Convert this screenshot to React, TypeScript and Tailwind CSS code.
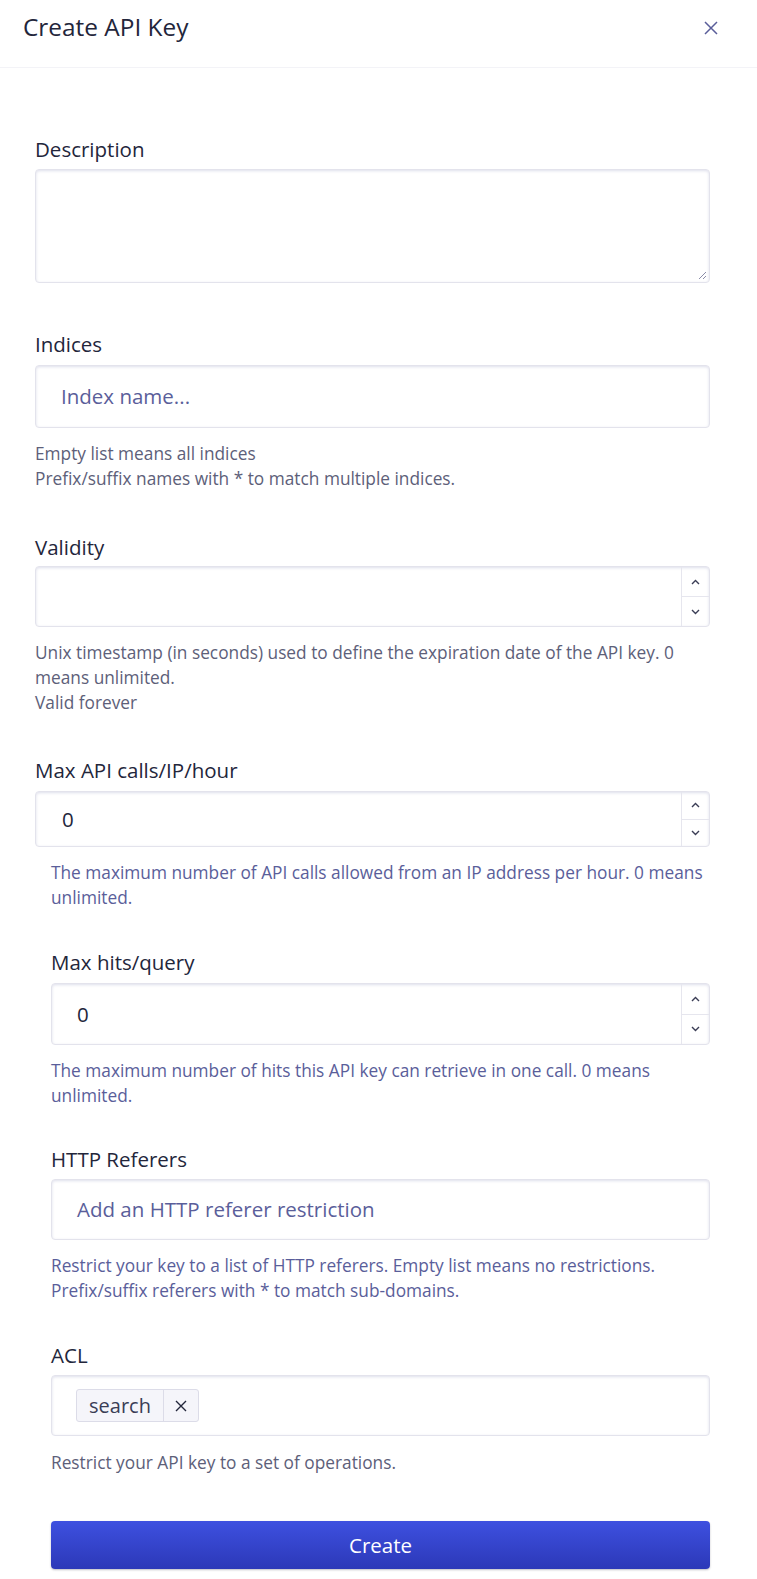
import React from "react";

const font = { fontFamily: '"Open Sans", "Noto Sans", sans-serif' };

function Label({ children, className = "" }: { children: React.ReactNode; className?: string }) {
  return (
    <div className={"text-[20.5px] leading-[30px] text-[#23263b] " + className}>{children}</div>
  );
}

function Help({ children, className = "" }: { children: React.ReactNode; className?: string }) {
  return <div className={"text-[17.3px] leading-[25px] " + className}>{children}</div>;
}

function Spinner() {
  return (
    <div className="flex flex-col w-[28px] border-l border-[#e6e6ee] self-stretch">
      <div className="flex-1 flex items-center justify-center border-b border-[#e6e6ee]">
        <svg width="9" height="6" viewBox="0 0 9 6" fill="none" stroke="#3a3d55" strokeWidth="1.4">
          <path d="M1 5 L4.5 1.5 L8 5" />
        </svg>
      </div>
      <div className="flex-1 flex items-center justify-center">
        <svg width="9" height="6" viewBox="0 0 9 6" fill="none" stroke="#3a3d55" strokeWidth="1.4">
          <path d="M1 1 L4.5 4.5 L8 1" />
        </svg>
      </div>
    </div>
  );
}

const boxCls =
  "rounded-[4px] border border-[#e3e3ec] bg-white shadow-[inset_0_1px_3px_rgba(119,122,175,0.25)]";

export default function App() {
  return (
    <div className="w-[757px] min-h-[1579px] bg-white" style={font}>
      <div className="h-[68px] border-b border-[#f3f3f7] flex items-start justify-between pl-[23px] pr-[38px] pt-[11px]">
        <div className="text-[24.4px] leading-[32px] text-[#23263b]">Create API Key</div>
        <svg width="16" height="16" viewBox="0 0 16 16" className="mt-[9px]" fill="none" stroke="#5a5e9a" strokeWidth="1.5">
          <path d="M2 2 L14 14 M14 2 L2 14" />
        </svg>
      </div>

      <div className="pr-[47px]">
        {/* Description */}
        <div className="pl-[35px] pt-[66px]">
          <Label>Description</Label>
          <div className={"mt-[5px] h-[114px] relative " + boxCls}>
            <svg width="10" height="10" viewBox="0 0 10 10" className="absolute right-[2px] bottom-[2px]" stroke="#8a8ca8" strokeWidth="1">
              <path d="M9 2 L2 9 M9 6 L6 9" />
            </svg>
          </div>
        </div>

        {/* Indices */}
        <div className="pl-[35px] pt-[46px]">
          <Label>Indices</Label>
          <div className={"mt-[6px] h-[63px] flex items-center pl-[25px] " + boxCls}>
            <span className="text-[20.5px] text-[#5a5e9a]">Index name...</span>
          </div>
          <Help className="mt-[13px] text-[#5d6079]">
            Empty list means all indices
            <br />
            Prefix/suffix names with * to match multiple indices.
          </Help>
        </div>

        {/* Validity */}
        <div className="pl-[35px] pt-[41px]">
          <Label>Validity</Label>
          <div className={"mt-[4px] h-[61px] flex " + boxCls}>
            <div className="flex-1" />
            <Spinner />
          </div>
          <Help className="mt-[13px] text-[#5d6079]">
            Unix timestamp (in seconds) used to define the expiration date of the API key. 0 means unlimited.
            <br />
            Valid forever
          </Help>
        </div>

        {/* Max API calls */}
        <div className="pt-[40px]">
          <Label className="pl-[35px]">Max API calls/IP/hour</Label>
          <div className="pl-[35px]">
            <div className={"mt-[6px] h-[56px] flex " + boxCls}>
              <div className="flex-1 flex items-center pl-[26px] text-[20.5px] text-[#23263b]">0</div>
              <Spinner />
            </div>
          </div>
          <Help className="mt-[13px] pl-[51px] text-[#5a5e9a]">
            The maximum number of API calls allowed from an IP address per hour. 0 means unlimited.
          </Help>
        </div>

        {/* Max hits/query */}
        <div className="pl-[51px] pt-[37px]">
          <Label>Max hits/query</Label>
          <div className={"mt-[6px] h-[62px] flex " + boxCls}>
            <div className="flex-1 flex items-center pl-[25px] text-[20.5px] text-[#23263b]">0</div>
            <Spinner />
          </div>
          <Help className="mt-[13px] text-[#5a5e9a]">
            The maximum number of hits this API key can retrieve in one call. 0 means unlimited.
          </Help>
        </div>

        {/* HTTP Referers */}
        <div className="pl-[51px] pt-[36px]">
          <Label>HTTP Referers</Label>
          <div className={"mt-[5px] h-[61px] flex items-center pl-[25px] " + boxCls}>
            <span className="text-[20.5px] text-[#5a5e9a]">Add an HTTP referer restriction</span>
          </div>
          <Help className="mt-[13px] text-[#5a5e9a]">
            Restrict your key to a list of HTTP referers. Empty list means no restrictions.
            <br />
            Prefix/suffix referers with * to match sub-domains.
          </Help>
        </div>

        {/* ACL */}
        <div className="pl-[51px] pt-[37px]">
          <Label>ACL</Label>
          <div className={"mt-[5px] h-[61px] flex items-center pl-[24px] " + boxCls}>
            <div className="flex h-[33px] rounded-[3px] border border-[#dcdce8] bg-[#f5f5fa]">
              <span className="flex items-center px-[12px] text-[20px] text-[#3a3d55] border-r border-[#dcdce8]">search</span>
              <span className="flex items-center justify-center w-[34px]">
                <svg width="12" height="12" viewBox="0 0 12 12" fill="none" stroke="#23263b" strokeWidth="1.4">
                  <path d="M1 1 L11 11 M11 1 L1 11" />
                </svg>
              </span>
            </div>
          </div>
          <Help className="mt-[14px] text-[#5d6079]">Restrict your API key to a set of operations.</Help>
        </div>

        {/* Button */}
        <div className="pl-[51px] pt-[46px]">
          <button className="w-full h-[48px] rounded-[4px] bg-gradient-to-b from-[#3e50e0] to-[#2c38b8] text-white text-[20.5px] shadow-[0_1px_2px_rgba(35,38,59,0.3)]">
            Create
          </button>
        </div>
      </div>
    </div>
  );
}
